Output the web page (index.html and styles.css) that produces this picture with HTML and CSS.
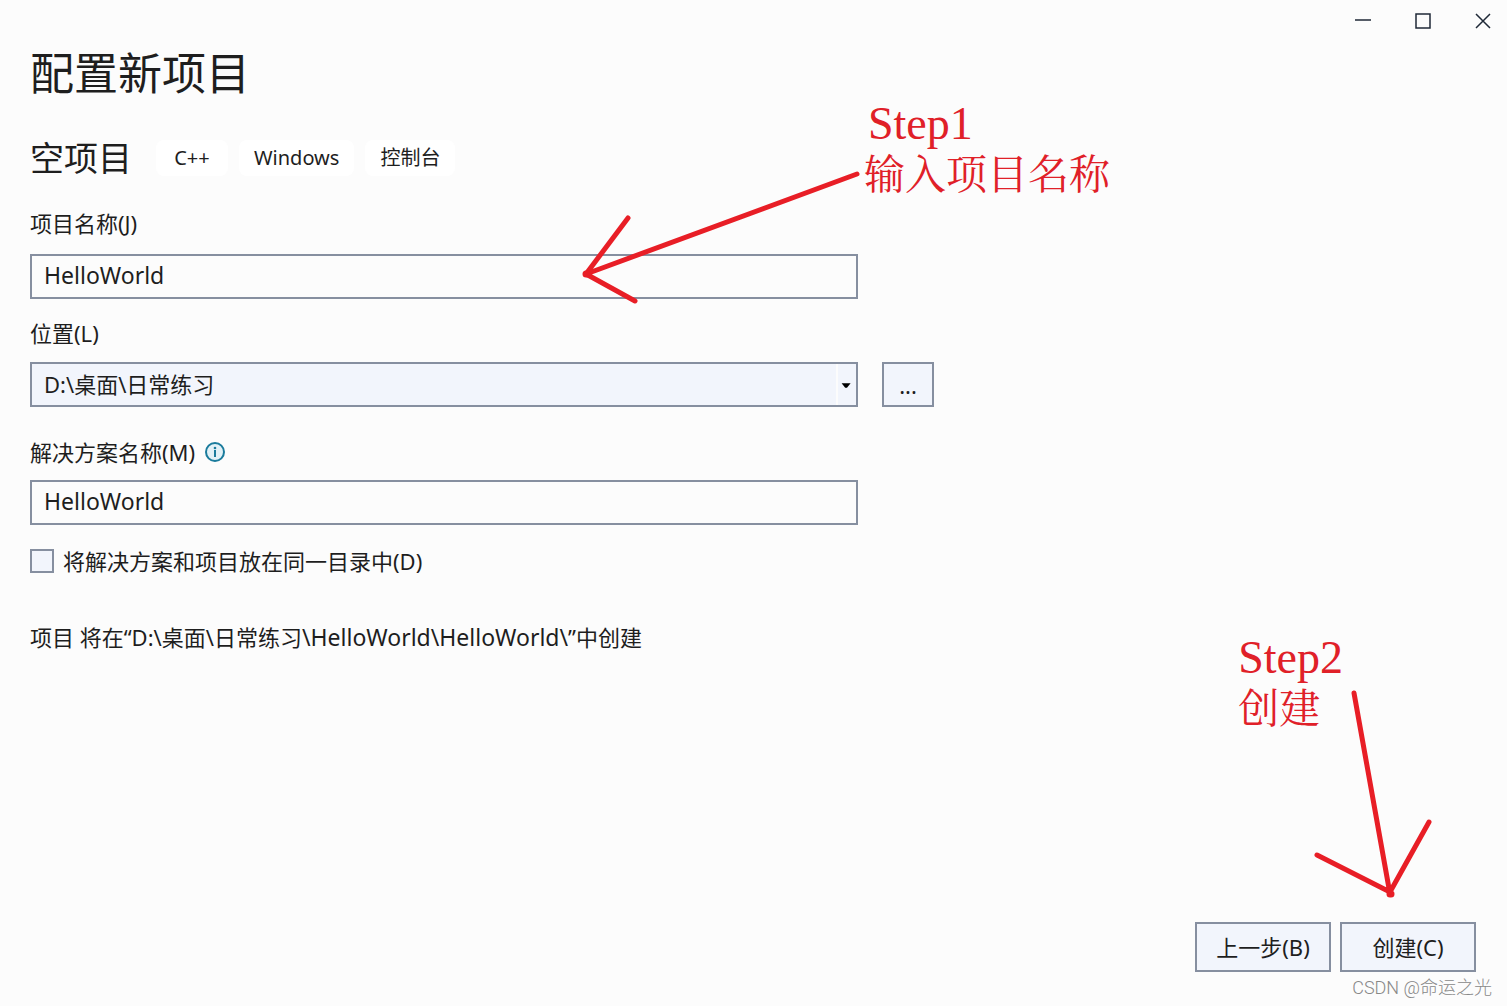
FILE: index.html
```html
<!DOCTYPE html>
<html lang="zh-CN">
<head>
    <meta charset="UTF-8">
    <title>配置新项目</title>
    <link rel="stylesheet" href="styles.css">
</head>
<body>
<div class="window">
    <div class="titlebar">
        <button type="button" aria-label="最小化">
            <svg width="16" height="16" viewBox="0 0 16 16"><path d="M0 7h16"/></svg>
        </button>
        <button type="button" aria-label="最大化">
            <svg width="16" height="16" viewBox="0 0 16 16"><path d="M1 1h14v14H1z"/></svg>
        </button>
        <button type="button" aria-label="关闭">
            <svg width="16" height="16" viewBox="0 0 16 16"><path d="M1 1l14 14M15 1L1 15"/></svg>
        </button>
    </div>
    <form class="content">
        <h1>配置新项目</h1>
        <div class="template">
            <h2>空项目</h2>
            <span class="tag">C++</span>
            <span class="tag">Windows</span>
            <span class="tag">控制台</span>
        </div>

        <div class="field">
            <label for="name">项目名称(J)</label>
            <input class="box" type="text" id="name" value="HelloWorld">
            <!-- 标注一 -->
            <div class="note note-name">
                <svg class="arrow" width="280" height="140" viewBox="0 0 280 140">
                    <path d="M273 44L2 144M44 88L2 144L51 171"/>
                    <path class="tip" d="M2 144h1"/>
                </svg>
                <p><span>Step1</span><br>输入项目名称</p>
            </div>
        </div>
        <div class="field field-path">
            <label for="path">位置(L)</label>
            <div class="row">
                <div class="combo">
                    <select class="box" id="path">
                        <option>D:\桌面\日常练习</option>
                    </select>
                    <svg class="caret" width="20" height="41" viewBox="0 0 20 41"><path d="M4 19h10l-4 5h-2z"/></svg>
                </div>
                <button class="box browse" type="button">...</button>
            </div>
        </div>
        <div class="field">
            <div class="label-row">
                <label for="solution">解决方案名称(M)</label>
                <svg width="20" height="20" viewBox="0 0 20 20">
                    <circle cx="10" cy="10" r="9" fill="#e2f1f7" stroke="#1a7b9c" stroke-width="2"/>
                    <path d="M10 8v7" stroke="#1a7b9c" stroke-width="2"/>
                    <circle cx="10" cy="6" r="1.3" fill="#1a7b9c"/>
                </svg>
            </div>
            <input class="box" type="text" id="solution" value="HelloWorld">
        </div>
        <div class="check">
            <input type="checkbox" id="same">
            <label for="same">将解决方案和项目放在同一目录中(D)</label>
        </div>
        <p class="result">项目 将在“D:\桌面\日常练习<span>\HelloWorld\HelloWorld\</span>”中创建</p>
    </form>
    <div class="footer">
        <button class="box" type="button">上一步(B)</button>
        <button class="box" type="button">创建(C)</button>
        <!-- 标注二 -->
        <div class="note note-create">
            <svg class="arrow" width="120" height="212" viewBox="0 0 120 212">
                <path d="M41 5L77 206M4 167L77 204L116 134"/>
                <path class="tip" d="M77 206h1"/>
            </svg>
            <p><span>Step2</span><br>创建</p>
        </div>
        <span class="watermark">CSDN @命运之光</span>
    </div>
</div>
</body>
</html>
```

FILE: styles.css
```css
* {
    margin: 0;
    padding: 0;
    box-sizing: border-box;
}
body{
    font: 22px/30px "Noto Sans", "Noto Sans CJK SC", sans-serif;
    color: #1e1e1e;
    background-color: #fcfcfc;
}
.window{
    min-height: 100vh;
    display: flex;
    flex-direction: column;
    overflow: hidden;
}
.titlebar{
    height: 42px;
    display: flex;
    justify-content: flex-end;
    gap: 12px;
}
.titlebar button{
    width: 48px;
    border: none;
    background: none;
    display: flex;
    align-items: center;
    justify-content: center;
}
.titlebar path{
    fill: none;
    stroke: #1f2937;
    stroke-width: 1.5;
}
.content{
    padding: 0 30px;
}
h1{
    font-size: 44px;
    font-weight: 400;
    line-height: 62px;
}
h2{
    font-size: 34px;
    font-weight: 400;
    line-height: 40px;
    margin-right: 13px;
}
.template{
    display: flex;
    align-items: center;
    gap: 11px;
    margin: 34px 0 30px;
}
.tag{
    min-width: 72px;
    padding: 3px 14px;
    font-size: 20px;
    text-align: center;
    background-color: #fff;
    border-radius: 8px;
}
.tag + .tag{
    padding: 3px 15px;
}
.field{
    position: relative;
    max-width: 828px;
    margin-bottom: 19px;
}
.field-path{
    max-width: 904px;
    margin-bottom: 30px;
}
.field label{
    display: block;
}
.box{
    font: inherit;
    color: inherit;
    height: 45px;
    border: 2px solid #868fa0;
    border-radius: 0;
    background-color: #f2f5fc;
}
input.box, select.box{
    display: block;
    width: 100%;
    padding: 0 12px;
}
input.box{
    margin-top: 16px;
    padding-bottom: 4px;
    font-size: 23px;
    background-color: #fcfcfc;
}
select.box{
    padding-bottom: 2px;
}
.row{
    display: flex;
    gap: 24px;
    margin-top: 14px;
}
.combo{
    flex: 1;
    position: relative;
}
.combo select{
    appearance: none;
}
.caret{
    position: absolute;
    top: 2px;
    right: 2px;
    border-left: 2px solid #fcfcfc;
    pointer-events: none;
}
.browse{
    width: 52px;
}
.label-row{
    display: flex;
    align-items: center;
    gap: 10px;
}
.label-row + input.box{
    margin-top: 13px;
}
.check{
    display: flex;
    align-items: center;
    gap: 9px;
    margin-top: 21px;
}
.check input{
    appearance: none;
    width: 24px;
    height: 24px;
    border: 2px solid #868fa0;
    background-color: #f2f5fc;
}
.result{
    margin-top: 46px;
}
.result span{
    font-size: 23px;
}
.footer{
    position: relative;
    display: flex;
    justify-content: flex-end;
    gap: 9px;
    margin-top: auto;
    padding: 0 31px 34px;
}
.footer .box{
    width: 136px;
    height: 50px;
}

/* 红色标注 */
.note{
    position: absolute;
    font: 41px/50px "Liberation Serif", "Noto Serif CJK SC", "Noto Sans CJK SC", serif;
    font-weight: 400;
    color: #e02028;
    white-space: nowrap;
    pointer-events: none;
    z-index: 1;
}
.note span{
    font-size: 46px;
    padding-left: 4px;
}
.note-name{
    left: 834px;
    top: -109px;
}
.note-create{
    right: 164px;
    bottom: 272px;
}
.note-create span{
    padding-left: 0;
}
.arrow{
    position: absolute;
    overflow: visible;
}
.note-name .arrow{
    right: 100%;
    top: 31px;
}
.note-create .arrow{
    left: 75px;
    top: 55px;
}
.arrow path{
    fill: none;
    stroke: #e81e26;
    stroke-width: 5;
    stroke-linecap: round;
    stroke-linejoin: round;
}
.arrow .tip{
    stroke-width: 7;
}
.watermark{
    position: absolute;
    right: 15px;
    bottom: 3px;
    font: 18px/30px Roboto, "Noto Sans CJK SC", sans-serif;
    font-weight: 300;
    color: #888;
}
```
